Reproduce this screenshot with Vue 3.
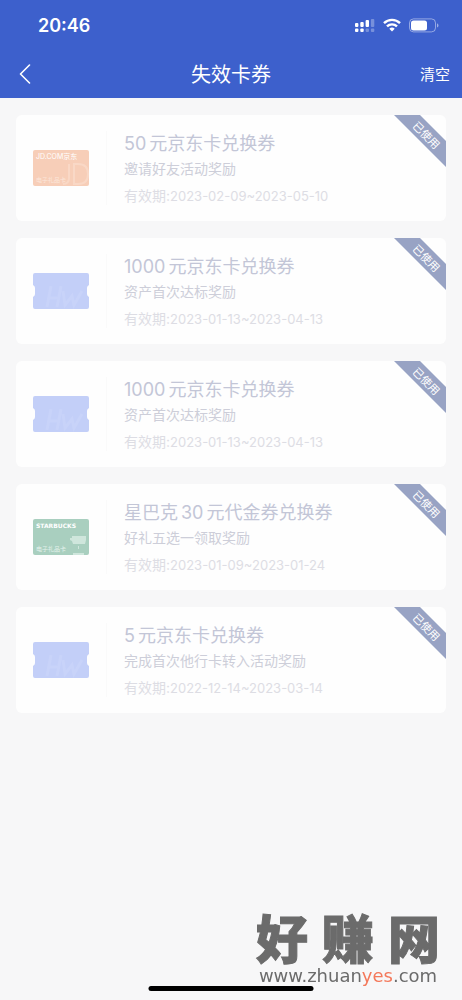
<script setup>
const coupons = [
  { art: 'jd', lead: '', amount: '50', rest: '元京东卡兑换券', reason: '邀请好友活动奖励', period: '2023-02-09~2023-05-10' },
  { art: 'ticket', lead: '', amount: '1000', rest: '元京东卡兑换券', reason: '资产首次达标奖励', period: '2023-01-13~2023-04-13' },
  { art: 'ticket', lead: '', amount: '1000', rest: '元京东卡兑换券', reason: '资产首次达标奖励', period: '2023-01-13~2023-04-13' },
  { art: 'starbucks', lead: '星巴克', amount: '30', rest: '元代金券兑换券', reason: '好礼五选一领取奖励', period: '2023-01-09~2023-01-24' },
  { art: 'ticket', lead: '', amount: '5', rest: '元京东卡兑换券', reason: '完成首次他行卡转入活动奖励', period: '2022-12-14~2023-03-14' },
]
</script>

<template>
  <div class="page" lang="zh-CN">
    <header class="header">
      <div class="status">
        <span class="time">20:46</span>
        <div class="indicators">
          <svg class="signal" width="20" height="15" viewBox="0 0 20 15" fill="#fff" aria-hidden="true">
            <rect x="0" y="5" width="3.4" height="4" rx="1" />
            <rect x="5.3" y="4" width="3.4" height="5" rx="1" />
            <rect x="10.6" y="2" width="3.4" height="7" rx="1" />
            <rect x="15.9" y="1" width="3.4" height="8" rx="1" opacity=".3" />
            <rect x="0" y="10.6" width="3.4" height="3.4" rx="1" />
            <rect x="5.3" y="10.6" width="3.4" height="3.4" rx="1" />
            <rect x="10.6" y="10.6" width="3.4" height="3.4" rx="1" opacity=".3" />
            <rect x="15.9" y="10.6" width="3.4" height="3.4" rx="1" opacity=".3" />
          </svg>
          <svg class="wifi" width="18" height="14" viewBox="0 0 18 14" fill="none" stroke="#fff" stroke-width="2.4" aria-hidden="true">
            <path d="M1 5.2a11.4 11.4 0 0 1 16 0" />
            <path d="M4 8.4a7.1 7.1 0 0 1 10 0" />
            <path d="M9 13.4 6.3 10.7a3.9 3.9 0 0 1 5.4 0Z" fill="#fff" stroke="none" />
          </svg>
          <svg class="battery" width="30" height="15" viewBox="0 0 30 15" aria-hidden="true">
            <rect x=".5" y=".9" width="26" height="13" rx="4" fill="none" stroke="#fff" stroke-opacity=".45" />
            <rect x="2" y="2.4" width="16" height="10" rx="2.5" fill="#fff" />
            <path d="M28 5.2c2 .8 2 3.6 0 4.4Z" fill="#fff" fill-opacity=".5" />
          </svg>
        </div>
      </div>
      <nav class="nav">
        <button class="back" type="button" aria-label="返回">
          <svg width="12" height="20" viewBox="0 0 12 20" fill="none" stroke="#fff" stroke-width="1.6" stroke-linecap="round" stroke-linejoin="round" aria-hidden="true">
            <path d="M10.5 1 1.5 10l9 9" />
          </svg>
        </button>
        <h1 class="heading">失效卡券</h1>
        <button class="clear" type="button">清空</button>
      </nav>
    </header>

    <main class="list">
      <article v-for="(c, i) in coupons" :key="i" class="coupon">
        <div class="art">
          <svg v-if="c.art === 'jd'" width="56" height="36" viewBox="0 0 56 36" aria-hidden="true">
            <rect width="56" height="36" rx="2" fill="#f7ceb8" />
            <path d="M36 14v14q0 6-6 6M41 14v20h4q10 0 10-10t-10-10Z" fill="none" stroke="#f9d8c6" stroke-width="2" />
            <text x="3" y="9" class="jd-name">JD.COM京东</text>
            <text x="3" y="32" class="kind faint">电子礼品卡</text>
          </svg>
          <svg v-else-if="c.art === 'starbucks'" width="56" height="36" viewBox="0 0 56 36" aria-hidden="true">
            <rect width="56" height="36" rx="2" fill="#a9cfbf" />
            <path d="M39 17h14v4l-1 4H40l-1-3-2-1v-2h2ZM40 34h11v2H40ZM45 27h1v3h-1Z" fill="#cfe6dc" />
            <text x="3" y="9" class="brand">STARBUCKS</text>
            <text x="3" y="32" class="kind">电子礼品卡</text>
          </svg>
          <svg v-else width="56" height="36" viewBox="0 0 56 36" aria-hidden="true">
            <path d="M2 0h52q2 0 2 2v10q-2 1-2 3v6q0 2 2 3v10q0 2-2 2H2q-2 0-2-2V24q2-1 2-3v-6q0-2-2-3V2q0-2 2-2Z" fill="#c3cff8" />
            <path d="m18 13-4 21m14-21-4 21M17 25h9m4-7 2 14 7-9 2 9 8-14" fill="none" stroke="#c8d3f9" stroke-width="3" />
          </svg>
        </div>
        <div class="info">
          <h2 class="title">
            <span v-if="c.lead">{{ c.lead }}</span>
            <span>{{ c.amount }}</span>
            <span>{{ c.rest }}</span>
          </h2>
          <p class="reason">{{ c.reason }}</p>
          <p class="period">有效期:<span class="dates">{{ c.period }}</span></p>
        </div>
        <div class="ribbon"><span class="ribbon-text">已使用</span></div>
      </article>
    </main>

    <div class="watermark">
      <div class="mark-name"><span>好</span><span>赚</span><span>网</span></div>
      <div class="mark-url">www.zhuan<span class="accent">yes</span>.com</div>
    </div>
    <div class="home-bar"></div>
  </div>
</template>

<style>
body {
  margin: 0;
  background: #f7f7f8;
}
</style>

<style scoped>
.page {
  min-height: 100vh;
  background: #f7f7f8;
  font-family: Inter, "Noto Sans CJK SC", sans-serif;
}
.header {
  background: #3d60cc;
  color: #fff;
}
.status {
  display: flex;
  justify-content: space-between;
  align-items: center;
  height: 50px;
  padding: 0 23px 0 38px;
}
.time {
  padding-top: 2px;
  font-size: 18px;
  font-weight: 600;
  line-height: 24px;
}
.indicators {
  display: flex;
  align-items: center;
  gap: 8px;
}
.nav {
  display: grid;
  grid-template-columns: 1fr auto 1fr;
  align-items: center;
  height: 48px;
  padding: 0 12px;
}
.back,
.clear {
  padding: 0;
  border: 0;
  background: none;
  color: inherit;
  font-family: inherit;
  cursor: pointer;
}
.back {
  display: flex;
  justify-self: start;
  padding-left: 7px;
}
.clear {
  justify-self: end;
  padding-top: 2px;
  font-size: 15px;
  line-height: 24px;
}
.heading {
  margin: 0;
  padding-top: 2px;
  font-size: 20px;
  font-weight: 400;
  line-height: 28px;
}
.list {
  display: flex;
  flex-direction: column;
  gap: 17px;
  padding: 17px 16px;
}
.coupon {
  position: relative;
  display: flex;
  align-items: center;
  height: 106px;
  border-radius: 6px;
  background: #fefefe;
  overflow: hidden;
}
.art {
  display: flex;
  align-items: center;
  height: 74px;
  padding: 0 17px;
  border-right: 1px solid #fafafa;
}
.info {
  flex: 1;
  padding: 2px 0 0 17px;
}
.title {
  display: flex;
  gap: 3px;
  margin: 0;
  color: #c3c6d7;
  font-size: 18px;
  font-weight: 400;
  line-height: 26px;
}
.reason,
.period {
  margin: 0;
  color: #cdced9;
  font-size: 14px;
  line-height: 24px;
}
.period {
  margin-top: 4px;
  color: #dddde4;
  line-height: 22px;
}
.dates {
  font-size: 13px;
}
.jd-name {
  fill: #fff;
  font-size: 7px;
}
.kind {
  fill: #e4f2ec;
  font-size: 6px;
}
.kind.faint {
  fill: #fce6da;
}
.brand {
  fill: #fff;
  font-family: "DejaVu Sans", sans-serif;
  font-size: 6px;
  font-weight: 700;
}
.ribbon {
  position: absolute;
  top: 0;
  right: 0;
  display: flex;
  align-items: center;
  justify-content: center;
  width: 52px;
  height: 52px;
  background: #98a3c4;
  clip-path: polygon(0 0, 26px 0, 52px 26px, 52px 52px);
}
.ribbon-text {
  padding-bottom: 16px;
  color: #fff;
  font-size: 11px;
  line-height: 14px;
  white-space: nowrap;
  rotate: 45deg;
  transform-origin: center;
}
.watermark {
  position: fixed;
  right: 22px;
  bottom: 14px;
  width: 184px;
  color: #6b6b6b;
}
.mark-name {
  display: flex;
  justify-content: space-between;
  font-size: 52px;
  font-weight: 900;
  line-height: 50px;
  -webkit-text-stroke: 1px #6b6b6b;
}
.mark-url {
  font-family: "DejaVu Sans", sans-serif;
  font-size: 18px;
  line-height: 20px;
  text-align: center;
  white-space: nowrap;
}
.accent {
  color: #f4795b;
}
.home-bar {
  position: fixed;
  bottom: 9px;
  left: 50%;
  width: 165px;
  height: 5px;
  border-radius: 3px;
  background: #000;
  translate: -50% 0;
}
</style>
